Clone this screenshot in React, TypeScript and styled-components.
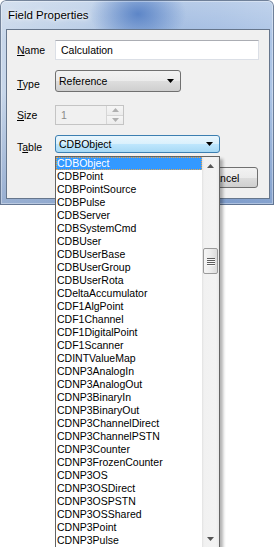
import React from 'react';
import styled, { createGlobalStyle, css } from 'styled-components';

const GlobalStyle = createGlobalStyle`
  body {
    margin: 0;
    padding: 0;
    background: #fff;
    font-family: "Liberation Sans", Arial, sans-serif;
    font-size: 10.5px;
    color: #000;
  }
`;

const Page = styled.div`
  width: 274px;
  height: 547px;
  overflow: hidden;
  background: #fff;
`;

const Window = styled.div`
  position: relative;
  width: 274px;
  height: 205px;
  box-sizing: border-box;
  padding: 0 4px 6px 6px;
  border-radius: 6px 6px 0 0;
  display: flex;
  flex-direction: column;
  background:
    radial-gradient(ellipse 48px 34px at 138px 14px, rgba(78, 122, 194, 0.85), rgba(78, 122, 194, 0) 100%),
    linear-gradient(to bottom, rgba(255, 255, 255, 0.25) 0, rgba(255, 255, 255, 0) 20%, rgba(255, 255, 255, 0) 45%, rgba(40, 80, 150, 0.3) 100%),
    linear-gradient(to right, #c8d7ea 0%, #b8cce6 30%, #9cb8df 55%, #a3bde2 80%, #adc5e6 100%);
  box-shadow: inset 0 0 0 1px rgba(45, 65, 95, 0.6), inset 0 0 0 2px rgba(255, 255, 255, 0.35);
`;

const TitleBar = styled.div`
  height: 29px;
  display: flex;
  align-items: center;
  padding-left: 2px;
`;

const Title = styled.span`
  font-size: 11.5px;
  text-shadow: 0 0 6px rgba(255, 255, 255, 0.95), 0 0 3px rgba(255, 255, 255, 0.9);
`;

const Client = styled.div`
  height: 170px;
  box-sizing: border-box;
  border: 1px solid #66768c;
  background: #f0f0f0;
  padding: 0 10px 0 10px;
  display: flex;
  flex-direction: column;
`;

const Row = styled.div<{ $mt: number; $h: number }>`
  display: flex;
  align-items: center;
  margin-top: ${(p) => p.$mt}px;
  height: ${(p) => p.$h}px;
`;

const Label = styled.span<{ $drop?: number }>`
  width: 38px;
  flex: none;
  position: relative;
  top: ${(p) => p.$drop || 0}px;
`;

const Mnemonic = styled.span`
  text-decoration: underline;
`;

const TextBox = styled.div`
  width: 204px;
  height: 20px;
  box-sizing: border-box;
  display: flex;
  align-items: center;
  padding-left: 5px;
  background: #fff;
  border: 1px solid #dbdfe6;
  border-top-color: #abadb3;
`;

const Combo = styled.div<{ $w: number; $hot?: boolean }>`
  position: relative;
  width: ${(p) => p.$w}px;
  height: 100%;
  box-sizing: border-box;
  display: flex;
  align-items: center;
  justify-content: space-between;
  padding: 0 6px 0 3px;
  border-radius: 3px;
  border: 1px solid #707070;
  background: linear-gradient(to bottom, #f2f2f2 0%, #ebebeb 50%, #dddddd 51%, #cfcfcf 100%);
  ${(p) =>
    p.$hot &&
    css`
      border-color: #3c7fb1;
      background: linear-gradient(to bottom, #eaf6fd 0%, #d9f0fc 50%, #bee6fd 51%, #a7d9f5 100%);
    `}
`;

const DropArrow = () => (
  <svg width="7" height="4" viewBox="0 0 7 4">
    <polygon points="0,0 7,0 3.5,4" fill="#000" />
  </svg>
);

const SpinBox = styled.div`
  width: 69px;
  height: 20px;
  box-sizing: border-box;
  display: flex;
  border: 1px solid #c4c4c4;
  background: #f0f0f0;
`;

const SpinValue = styled.div`
  flex: 1;
  display: flex;
  align-items: center;
  padding-left: 5px;
  color: #8a8a8a;
`;

const SpinButtons = styled.div`
  width: 16px;
  display: flex;
  flex-direction: column;
  border-left: 1px solid #d6d6d6;
`;

const SpinHalf = styled.div<{ $bottom?: boolean }>`
  flex: 1;
  display: flex;
  align-items: center;
  justify-content: center;
  background: linear-gradient(to bottom, #f6f6f6, #ececec);
  ${(p) => p.$bottom && css`border-top: 1px solid #d6d6d6;`}
`;

const SmallArrow = ({ up, color }: { up?: boolean; color: string }) => (
  <svg width="7" height="4" viewBox="0 0 7 4">
    <polygon points={up ? '0,4 7,4 3.5,0' : '0,0 7,0 3.5,4'} fill={color} />
  </svg>
);

const TableField = styled.div`
  position: relative;
  height: 100%;
`;

const DropList = styled.div`
  position: absolute;
  z-index: 10;
  top: 21px;
  left: 0;
  width: 165px;
  height: 392px;
  box-sizing: border-box;
  display: flex;
  border: 1px solid #646464;
  background: #fff;
  box-shadow: 3px 3px 3px rgba(0, 0, 0, 0.3);
`;

const Items = styled.div`
  flex: 1;
  overflow: hidden;
`;

const Item = styled.div<{ $selected?: boolean }>`
  height: 13px;
  line-height: 13px;
  padding-left: 1px;
  white-space: nowrap;
  ${(p) =>
    p.$selected &&
    css`
      background: #3399ff;
      color: #fff;
      outline: 1px dotted #e8a64a;
      outline-offset: -1px;
    `}
`;

const ScrollBar = styled.div`
  width: 17px;
  display: flex;
  flex-direction: column;
  background: linear-gradient(to right, #e2e2e2 0, #f1f1f1 2px, #f3f3f3 14px, #e9e9e9 100%);
`;

const ScrollButton = styled.div`
  height: 17px;
  flex: none;
  display: flex;
  align-items: center;
  justify-content: center;
`;

const ScrollSpace = styled.div<{ $h?: number }>`
  ${(p) => (p.$h ? `height: ${p.$h}px; flex: none;` : 'flex: 1;')}
`;

const Thumb = styled.div`
  height: 26px;
  margin: 0 1px;
  box-sizing: border-box;
  border: 1px solid #9a9a9a;
  border-radius: 2px;
  background: linear-gradient(to right, #f5f5f5 0%, #ececec 50%, #dcdcdc 100%);
  display: flex;
  flex-direction: column;
  align-items: center;
  justify-content: center;
  gap: 1px;
`;

const GripLine = styled.div`
  width: 8px;
  height: 1px;
  background: #5d5d5d;
  box-shadow: 0 1px 0 #fafafa;
`;

const ButtonRow = styled.div`
  display: flex;
  justify-content: flex-end;
  gap: 7px;
  margin-top: 14px;
  height: 21px;
  padding-right: 1px;
`;

const PushButton = styled.div`
  width: 70px;
  height: 21px;
  box-sizing: border-box;
  display: flex;
  align-items: center;
  justify-content: center;
  border-radius: 3px;
  border: 1px solid #707070;
  background: linear-gradient(to bottom, #f2f2f2 0%, #ebebeb 50%, #dddddd 51%, #cfcfcf 100%);
`;

const tables = [
  'CDBObject', 'CDBPoint', 'CDBPointSource', 'CDBPulse', 'CDBServer', 'CDBSystemCmd',
  'CDBUser', 'CDBUserBase', 'CDBUserGroup', 'CDBUserRota', 'CDeltaAccumulator',
  'CDF1AlgPoint', 'CDF1Channel', 'CDF1DigitalPoint', 'CDF1Scanner', 'CDINTValueMap',
  'CDNP3AnalogIn', 'CDNP3AnalogOut', 'CDNP3BinaryIn', 'CDNP3BinaryOut',
  'CDNP3ChannelDirect', 'CDNP3ChannelPSTN', 'CDNP3Counter', 'CDNP3FrozenCounter',
  'CDNP3OS', 'CDNP3OSDirect', 'CDNP3OSPSTN', 'CDNP3OSShared', 'CDNP3Point', 'CDNP3Pulse',
];

const App: React.FC = () => {
  const selected = tables[0];

  return (
    <Page>
      <GlobalStyle />
      <Window>
        <TitleBar>
          <Title>Field Properties</Title>
        </TitleBar>
        <Client>
          <Row $mt={10} $h={20}>
            <Label><Mnemonic>N</Mnemonic>ame</Label>
            <TextBox>Calculation</TextBox>
          </Row>
          <Row $mt={10} $h={22}>
            <Label $drop={3}><Mnemonic>T</Mnemonic>ype</Label>
            <Combo $w={126}>
              Reference
              <DropArrow />
            </Combo>
          </Row>
          <Row $mt={13} $h={20}>
            <Label><Mnemonic>S</Mnemonic>ize</Label>
            <SpinBox>
              <SpinValue>1</SpinValue>
              <SpinButtons>
                <SpinHalf><SmallArrow up color="#b0b0b0" /></SpinHalf>
                <SpinHalf $bottom><SmallArrow color="#b0b0b0" /></SpinHalf>
              </SpinButtons>
            </SpinBox>
          </Row>
          <Row $mt={10} $h={18}>
            <Label $drop={3}>T<Mnemonic>a</Mnemonic>ble</Label>
            <TableField>
              <Combo $w={165} $hot>
                {selected}
                <DropArrow />
              </Combo>
              <DropList>
                <Items>
                  {tables.map((t) => (
                    <Item key={t} $selected={t === selected}>{t}</Item>
                  ))}
                </Items>
                <ScrollBar>
                  <ScrollButton><SmallArrow up color="#555" /></ScrollButton>
                  <ScrollSpace $h={74} />
                  <Thumb>
                    <GripLine />
                    <GripLine />
                    <GripLine />
                    <GripLine />
                  </Thumb>
                  <ScrollSpace />
                  <ScrollButton><SmallArrow color="#555" /></ScrollButton>
                </ScrollBar>
              </DropList>
            </TableField>
          </Row>
          <ButtonRow>
            <PushButton>OK</PushButton>
            <PushButton>Cancel</PushButton>
          </ButtonRow>
        </Client>
      </Window>
    </Page>
  );
};

export default App;
